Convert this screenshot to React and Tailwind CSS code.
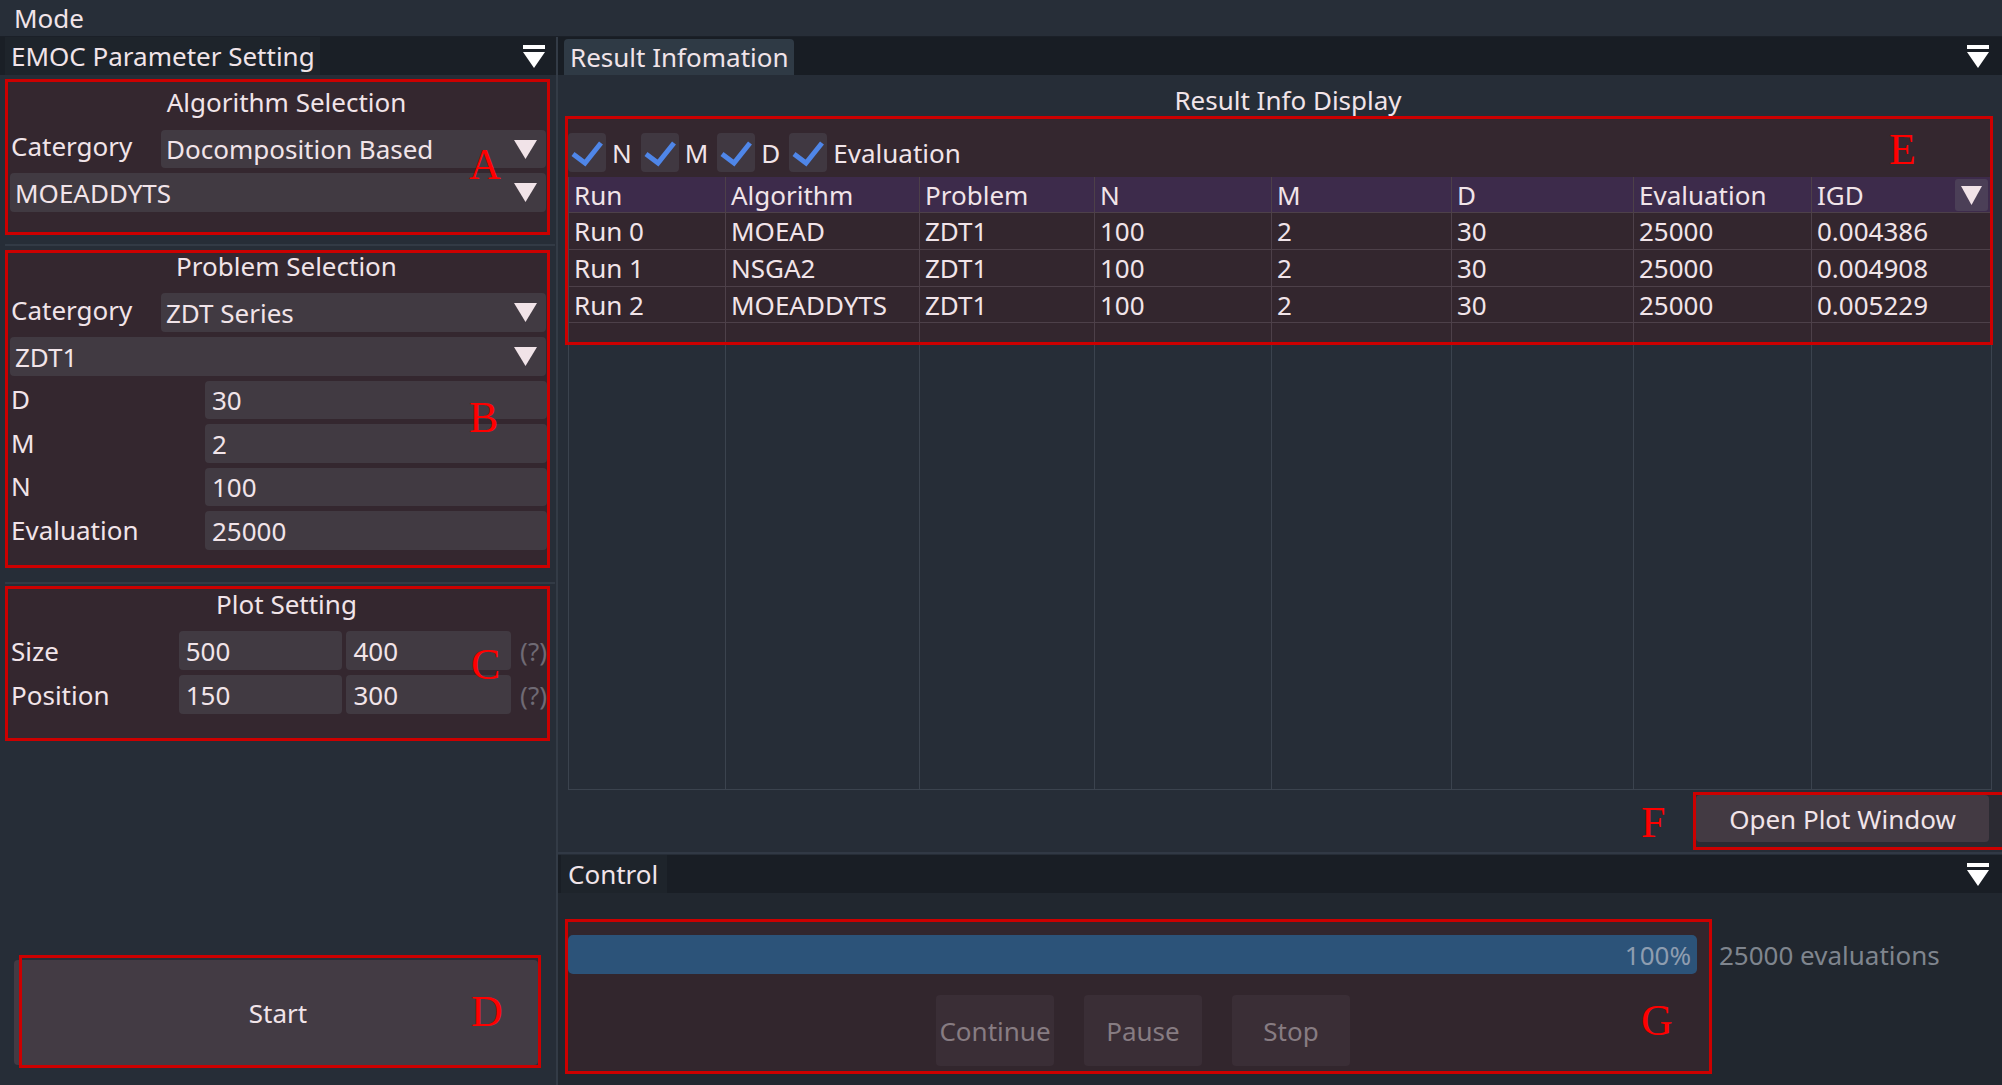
import React from "react";

function Tri({ w = 23, h = 19, color = "#f1e3e8" }) {
  return (
    <svg width={w} height={h} viewBox={`0 0 ${w} ${h}`} className="shrink-0">
      <polygon points={`0,0 ${w},0 ${w / 2},${h}`} fill={color} />
    </svg>
  );
}

function MenuIcon() {
  return (
    <svg width="22" height="23" viewBox="0 0 22 23" className="shrink-0">
      <rect x="0" y="0" width="22" height="4" fill="#ffffff" />
      <polygon points="0,7 22,7 11,23" fill="#ffffff" />
    </svg>
  );
}

function Check() {
  return (
    <div className="w-[38px] h-[39px] rounded-[4px] bg-[#403841] flex items-center justify-center shrink-0">
      <svg width="38" height="39" viewBox="0 0 38 39">
        <polyline points="5,21 17,30 33,10" fill="none" stroke="#4f86e8" strokeWidth="5" strokeLinejoin="miter" />
      </svg>
    </div>
  );
}

function Combo({ text, className }) {
  return (
    <div className={`bg-[#413a42] rounded-[4px] flex items-center pl-[5px] pr-[9px] ${className}`}>
      <span>{text}</span>
      <span className="ml-auto"><Tri /></span>
    </div>
  );
}

function Field({ value, className }) {
  return (
    <div className={`bg-[#413a42] rounded-[4px] flex items-center pl-[7px] ${className}`}>{value}</div>
  );
}

function Separator({ className }) {
  return <div className={`h-[2px] bg-[#323a45] ${className}`} />;
}

function LeftPanel() {
  return (
    <div className="w-[558px] shrink-0 border-r-2 border-[#333b46] flex flex-col">
      <div className="h-[38px] bg-[#1a1f26] flex items-center">
        <div className="h-full w-[315px] ml-[5px] bg-[#1e242b] flex items-center pl-[6px]">EMOC Parameter Setting</div>
        <div className="ml-auto mr-[11px]"><MenuIcon /></div>
      </div>
      <div className="pl-[5px] flex flex-col">
        {/* A */}
        <div className="mt-[4px] w-[545px] h-[156px] border-[3px] border-[#cc0000] bg-[#34272f] flex flex-col">
          <div className="h-[40px] flex items-center justify-center pl-[18px]">Algorithm Selection</div>
          <div className="mt-[8px] flex h-[38px]">
            <div className="pl-[3px] pb-[6px] w-[153px] flex items-center">Catergory</div>
            <Combo text="Docomposition Based" className="w-[385px] h-[38px]" />
          </div>
          <Combo text="MOEADDYTS" className="mt-[5px] ml-[2px] w-[536px] h-[39px]" />
        </div>
        <Separator className="mt-[9px] w-[550px]" />
        {/* B */}
        <div className="mt-[4px] w-[545px] h-[318px] border-[3px] border-[#cc0000] bg-[#34272f] flex flex-col">
          <div className="h-[34px] pb-[8px] flex items-center justify-center pl-[18px]">Problem Selection</div>
          <div className="mt-[6px] flex h-[39px]">
            <div className="pl-[3px] pb-[5px] w-[153px] flex items-center">Catergory</div>
            <Combo text="ZDT Series" className="w-[385px] h-[39px]" />
          </div>
          <Combo text="ZDT1" className="mt-[5px] ml-[2px] w-[536px] h-[39px]" />
          {[
            ["D", "30", "h-[38px]"],
            ["M", "2", "h-[39px]"],
            ["N", "100", "h-[38px]"],
            ["Evaluation", "25000", "h-[39px]"],
          ].map(([l, v, h]) => (
            <div key={l} className={`mt-[5px] flex ${h}`}>
              <div className="pl-[3px] pb-[2px] w-[197px] flex items-center">{l}</div>
              <Field value={v} className="w-[342px]" />
            </div>
          ))}
        </div>
        <Separator className="mt-[14px] w-[550px]" />
        {/* C */}
        <div className="mt-[2px] w-[545px] h-[155px] border-[3px] border-[#cc0000] bg-[#34272f] flex flex-col">
          <div className="h-[30px] flex items-center justify-center pl-[18px]">Plot Setting</div>
          {[
            ["Size", "500", "400", "mt-[12px]"],
            ["Position", "150", "300", "mt-[5px]"],
          ].map(([l, a, b, m]) => (
            <div key={l} className={`${m} flex h-[39px]`}>
              <div className="pl-[3px] w-[171px] flex items-center">{l}</div>
              <Field value={a} className="w-[164px]" />
              <Field value={b} className="ml-[4px] w-[165px]" />
              <div className="ml-[9px] flex items-center text-[#6f6a74]">(?)</div>
            </div>
          ))}
        </div>
        {/* D */}
        <div className="relative mt-[219px] ml-[9px] w-[524px] h-[105px]">
          <div className="w-full h-full bg-[#433b44] rounded-[4px] flex items-center justify-center pl-[4px]">Start</div>
          <div className="absolute left-[5px] top-[-5px] w-[522px] h-[113px] border-[3px] border-[#cc0000]" />
        </div>
      </div>
    </div>
  );
}

const COLS = "grid grid-cols-[157px_194px_175px_177px_180px_182px_178px_180px]";
const HEAD = ["Run", "Algorithm", "Problem", "N", "M", "D", "Evaluation", "IGD"];
const ROWS = [
  ["Run 0", "MOEAD", "ZDT1", "100", "2", "30", "25000", "0.004386"],
  ["Run 1", "NSGA2", "ZDT1", "100", "2", "30", "25000", "0.004908"],
  ["Run 2", "MOEADDYTS", "ZDT1", "100", "2", "30", "25000", "0.005229"],
];
const ROWH = ["h-[37px]", "h-[37px]", "h-[36px]"];

function RightPanel() {
  return (
    <div className="flex-1 flex flex-col overflow-hidden">
      <div className="h-[38px] bg-[#181d24] flex items-end shrink-0">
        <div className="ml-[6px] h-[36px] w-[230px] bg-[#2f3a45] rounded-t-[4px] flex items-center pl-[6px]">Result Infomation</div>
        <div className="ml-auto mr-[13px] self-center"><MenuIcon /></div>
      </div>
      <div className="pl-[7px] flex flex-col">
        <div className="h-[41px] flex items-center justify-center pt-[8px] pl-[9px]">Result Info Display</div>
        {/* E */}
        <div className="w-[1428px] h-[229px] border-[3px] border-[#cc0000] bg-[#34272f] flex flex-col overflow-hidden">
          <div className="mt-[14px] h-[39px] flex items-center gap-[9px]">
            {["N", "M", "D", "Evaluation"].map((l) => (
              <div key={l} className="flex items-center gap-[6px]">
                <Check />
                <span>{l}</span>
              </div>
            ))}
          </div>
          <div className={`mt-[5px] ${COLS} border-l border-[#4d4049]`}>
            {HEAD.map((h, i) => (
              <div key={h} className="h-[36px] bg-[#3d2b4b] border-r border-b border-[#4d4049] flex items-center pl-[5px] relative">
                {h}
                {i === 7 && (
                  <div className="absolute right-[3px] top-[2px] w-[33px] h-[32px] rounded-[3px] bg-[#4b3f57] flex items-center justify-center">
                    <Tri w={21} h={19} />
                  </div>
                )}
              </div>
            ))}
            {ROWS.map((r, ri) =>
              r.map((c, ci) => (
                <div key={`${ri}-${ci}`} className={`${ROWH[ri]} bg-[#33262e] border-r border-b border-[#4d4049] flex items-center pl-[5px]`}>
                  {c}
                </div>
              ))
            )}
            {HEAD.map((h) => (
              <div key={`e-${h}`} className="h-[19px] bg-[#33262e] border-r border-[#4d4049]" />
            ))}
          </div>
        </div>
        <div className={`ml-[3px] ${COLS} border-l border-b border-[#3b434e] w-[1424px]`}>
          {HEAD.map((h) => (
            <div key={`b-${h}`} className="h-[444px] border-r border-[#3b434e]" />
          ))}
        </div>
        {/* F */}
        <div className="mt-[2px] ml-[1128px] w-[312px] h-[58px] border-[3px] border-[#cc0000] shrink-0 bg-[#2b2a32]">
          <div className="w-[293px] h-[47px] bg-[#433a43] rounded-[4px] flex items-center justify-center">Open Plot Window</div>
        </div>
      </div>
      <div className="mt-[2px] h-[2px] bg-[#313945] shrink-0" />
      <div className="mt-[1px] h-[38px] bg-[#191e25] flex items-center shrink-0">
        <div className="ml-[3px] h-full w-[106px] bg-[#1e242b] flex items-center pl-[7px]">Control</div>
        <div className="ml-auto mr-[13px]"><MenuIcon /></div>
      </div>
      <div className="flex-1 bg-[#21272f] pl-[7px] flex items-start">
        {/* G */}
        <div className="mt-[26px] w-[1147px] h-[155px] border-[3px] border-[#cc0000] bg-[#32262d] flex flex-col shrink-0">
          <div className="mt-[13px] w-[1129px] h-[39px] rounded-[5px] bg-[#2c5379] flex items-center justify-end pr-[6px] text-[#8e9db0]">100%</div>
          <div className="mt-[21px] pl-[368px] flex gap-[30px]">
            {["Continue", "Pause", "Stop"].map((b) => (
              <div key={b} className="w-[118px] h-[71px] rounded-[4px] bg-[#3a2e36] text-[#877c82] flex items-center justify-center">{b}</div>
            ))}
          </div>
        </div>
        <div className="mt-[42px] ml-[7px] h-[39px] flex items-center text-[#7f858e] whitespace-nowrap">25000 evaluations</div>
      </div>
    </div>
  );
}

const LETTERS = [
  ["A", "left-[469px] top-[143px]"],
  ["B", "left-[469px] top-[396px]"],
  ["C", "left-[471px] top-[643px]"],
  ["D", "left-[471px] top-[990px]"],
  ["E", "left-[1889px] top-[128px]"],
  ["F", "left-[1641px] top-[801px]"],
  ["G", "left-[1641px] top-[999px]"],
];

export default function App() {
  return (
    <div className="w-[2002px] h-[1085px] overflow-hidden bg-[#262d37] text-[#f1e4e9] font-['Noto_Sans',sans-serif] text-[26px] leading-none relative">
      <div className="h-[37px] bg-[#272e38] border-b border-[#1b2028] flex items-center pl-[14px]">Mode</div>
      <div className="flex h-[1048px]">
        <LeftPanel />
        <RightPanel />
      </div>
      {LETTERS.map(([l, pos]) => (
        <div key={l} className={`absolute ${pos} font-['Liberation_Serif',serif] text-[44px] leading-none text-[#ff0000]`}>{l}</div>
      ))}
    </div>
  );
}
